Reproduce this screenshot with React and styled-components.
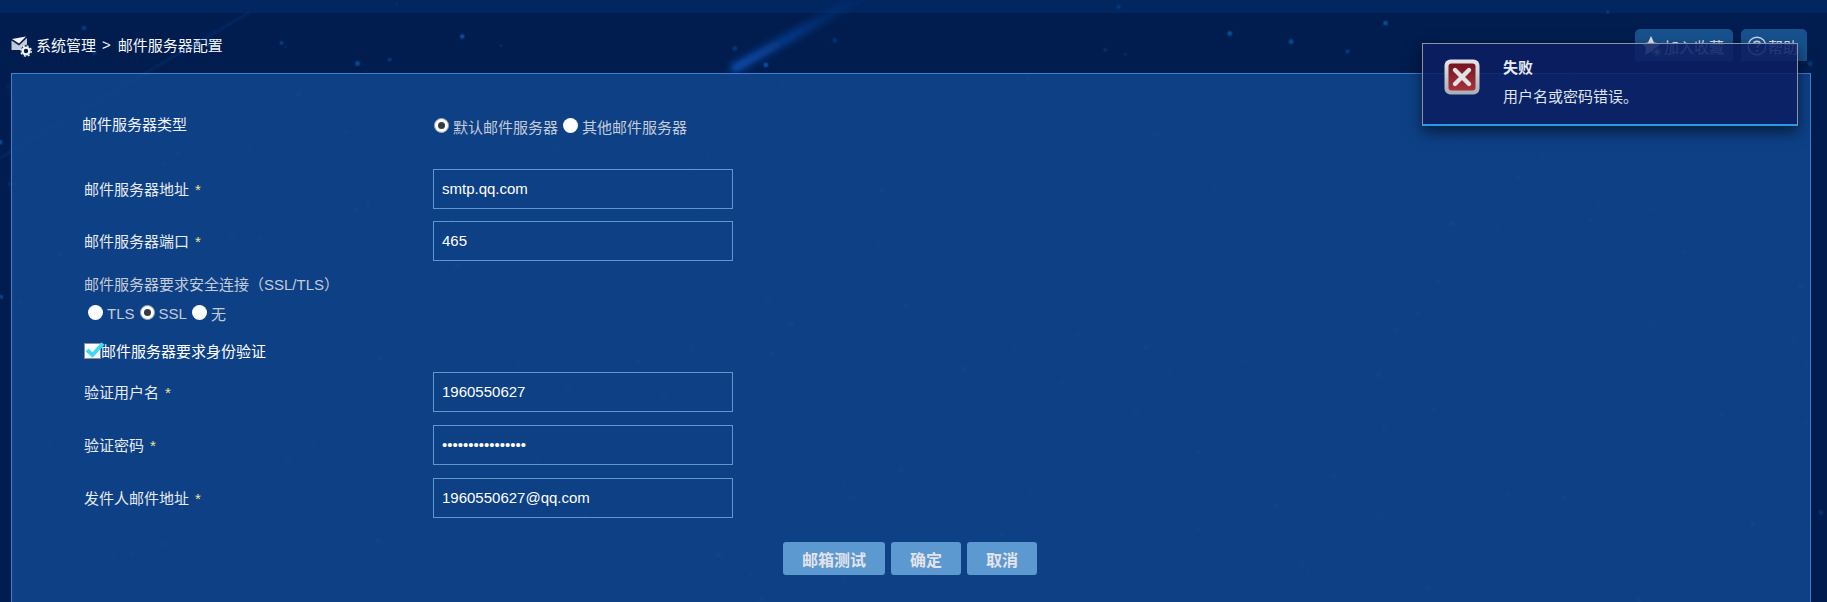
import React from 'react';
import styled, {createGlobalStyle} from 'styled-components';

const FONT = '"Liberation Sans", "Noto Sans CJK SC", sans-serif';

// seeded so the star field is the same on every load
function makeStars(count) {
	let seed = 17;
	const next = () => {
		seed = (seed * 16807) % 2147483647;
		return seed / 2147483647;
	};
	const stars = [];
	for (let i = 0; i < count; i++) {
		stars.push({x: next() * 1827, y: next() * 602, r: 0.8 + next() * 1.6, o: 0.25 + next() * 0.55});
	}
	return stars;
}

const stars = makeStars(260);

export default function App() {
	return (
		<Page>
			<GlobalStyle />
			<SkyDrawing width="1827" height="602" viewBox="0 0 1827 602">
				<defs>
					<linearGradient id="meteor" x1="0" y1="1" x2="1" y2="0">
						<stop offset="0" stopColor="#0a55c0" stopOpacity="0.9" />
						<stop offset="0.5" stopColor="#0a4aa8" stopOpacity="0.55" />
						<stop offset="1" stopColor="#0a3a88" stopOpacity="0" />
					</linearGradient>
					<filter id="soft"><feGaussianBlur stdDeviation="3.5" /></filter>
					<filter id="glow"><feGaussianBlur stdDeviation="1.3" /></filter>
				</defs>
				<line x1="735" y1="68" x2="870" y2="-8" stroke="url(#meteor)" strokeWidth="9" strokeLinecap="round" filter="url(#soft)" />
				<line x1="0" y1="158" x2="250" y2="12" stroke="#0a3f8f" strokeOpacity="0.3" strokeWidth="3" filter="url(#glow)" />
				{stars.map((s, i) => (
					<circle key={i} cx={s.x} cy={s.y} r={s.r} fill="#0f74d6" opacity={s.o} filter="url(#glow)" />
				))}
			</SkyDrawing>
			<TopStrip />
			<Header>
				<Crumb>
					<CrumbIcon />
					<span>系统管理</span>
					<CrumbArrow>&gt;</CrumbArrow>
					<span>邮件服务器配置</span>
				</Crumb>
				<HeaderActions>
					<HeaderButton><StarIcon />加入收藏</HeaderButton>
					<HeaderButton><HelpIcon />帮助</HeaderButton>
				</HeaderActions>
			</Header>
			<Panel>
				<TypeRow>
					<TypeLabel>邮件服务器类型</TypeLabel>
					<RadioGroup>
						<Radio checked />
						<RadioText>默认邮件服务器</RadioText>
						<Radio />
						<RadioText>其他邮件服务器</RadioText>
					</RadioGroup>
				</TypeRow>
				<Fields>
					<Field label="邮件服务器地址" value="smtp.qq.com" />
					<Field label="邮件服务器端口" value="465" />
				</Fields>
				<SecureTitle>邮件服务器要求安全连接（SSL/TLS）</SecureTitle>
				<SecureOptions>
					<Radio />
					<RadioText>TLS</RadioText>
					<Radio checked />
					<RadioText>SSL</RadioText>
					<Radio />
					<RadioText>无</RadioText>
				</SecureOptions>
				<CheckRow>
					<CheckBox>
						<svg width="19" height="15" viewBox="0 0 19 15">
							<path d="M2 8 L7.5 13 L18 1.5" fill="none" stroke="#3fd8f5" strokeWidth="4" />
						</svg>
					</CheckBox>
					<CheckText>邮件服务器要求身份验证</CheckText>
				</CheckRow>
				<AuthFields>
					<Field label="验证用户名" value="1960550627" />
					<Field label="验证密码" value="••••••••••••••••" />
					<Field label="发件人邮件地址" value="1960550627@qq.com" />
				</AuthFields>
				<Actions>
					<ActionButton>邮箱测试</ActionButton>
					<ActionButton>确定</ActionButton>
					<ActionButton>取消</ActionButton>
				</Actions>
			</Panel>
			<Toast>
				<ErrorIcon />
				<ToastBody>
					<ToastTitle>失败</ToastTitle>
					<ToastMessage>用户名或密码错误。</ToastMessage>
				</ToastBody>
			</Toast>
		</Page>
	);
}

function Field({label, value}) {
	return (
		<FieldRow>
			<FieldLabel>{label}<Required>*</Required></FieldLabel>
			<InputBox>{value}</InputBox>
		</FieldRow>
	);
}

function CrumbIcon() {
	return (
		<svg width="21" height="21" viewBox="0 0 21 21">
			<path d="M1 3 L15 0.5 L8 7.5 Z" fill="#f2f4f8" />
			<path d="M0.5 4.5 L8 9.5 L16 2 L16 8.5 L11.5 10.5 L9.5 14 L0.5 14 Z" fill="#c5ccd8" />
			<circle cx="15" cy="15" r="3.4" fill="none" stroke="#f4f6fa" strokeWidth="2.4" />
			<circle cx="15" cy="15" r="5.2" fill="none" stroke="#f4f6fa" strokeWidth="1.4" strokeDasharray="2 2.1" />
		</svg>
	);
}

function StarIcon() {
	return (
		<svg width="22" height="22" viewBox="0 0 22 22">
			<path d="M10 1 L13 7.5 L20 8.4 L15 13 L16 20 L10 16.5 L4 20 L5.2 13 L0.5 8.4 L7 7.5 Z" fill="#dfe6f0" />
			<circle cx="16" cy="17" r="4.5" fill="#5f7ea8" />
			<path d="M13.5 17 H18.5 M16 14.5 V19.5" stroke="#e6ecf4" strokeWidth="1.3" />
		</svg>
	);
}

function HelpIcon() {
	return (
		<svg width="20" height="20" viewBox="0 0 20 20">
			<circle cx="10" cy="10" r="8.8" fill="none" stroke="#cfd8e6" strokeWidth="1.5" />
			<path d="M7 7.6 C7 4.6 13 4.6 13 7.6 C13 9.6 10 9.6 10 12" fill="none" stroke="#cfd8e6" strokeWidth="1.8" />
			<circle cx="10" cy="14.8" r="1.1" fill="#cfd8e6" />
		</svg>
	);
}

function ErrorIcon() {
	return (
		<svg width="36" height="36" viewBox="0 0 36 36">
			<defs>
				<linearGradient id="errFrame" x1="0" y1="0" x2="0" y2="1">
					<stop offset="0" stopColor="#e4e6ea" />
					<stop offset="1" stopColor="#a9adb5" />
				</linearGradient>
				<linearGradient id="errFill" x1="0" y1="0" x2="0" y2="1">
					<stop offset="0" stopColor="#74141f" />
					<stop offset="1" stopColor="#a7333c" />
				</linearGradient>
			</defs>
			<rect x="0.5" y="0.5" width="35" height="35" rx="6" fill="url(#errFrame)" />
			<rect x="4.5" y="4.5" width="27" height="27" rx="3" fill="url(#errFill)" />
			<path d="M11 11 L25 25 M25 11 L11 25" stroke="#e2e2e6" strokeWidth="4.4" strokeLinecap="round" />
		</svg>
	);
}

function Radio({checked}) {
	return <RadioDot $checked={checked} />;
}

const GlobalStyle = createGlobalStyle`
	html, body {
		margin: 0;
		padding: 0;
		height: 100%;
		overflow: hidden;
		background: #011d4f;
	}
`;

const Page = styled.div`
	position: relative;
	width: 1827px;
	height: 602px;
	overflow: hidden;
	background: #011d4f;
	font-family: ${FONT};
	font-size: 15px;
	color: #fff;
`;

const SkyDrawing = styled.svg`
	position: absolute;
	top: 0;
	left: 0;
	z-index: 2;
	pointer-events: none;
`;

const TopStrip = styled.div`
	height: 13px;
	background: #012660;
`;

const Header = styled.div`
	display: flex;
	justify-content: space-between;
	height: 60px;
	padding: 16px 20px 0 11px;
	box-sizing: border-box;
`;

const Crumb = styled.div`
	display: flex;
	align-items: center;
	gap: 4px;
	height: 30px;
	color: #f4f7fb;

	svg {
		margin-top: 4px;
	}
`;

const CrumbArrow = styled.span`
	margin: 0 3px 0 2px;
`;

const HeaderActions = styled.div`
	display: flex;
	gap: 8px;
`;

const HeaderButton = styled.div`
	display: flex;
	align-items: center;
	gap: 1px;
	height: 32px;
	padding: 2px 9px 0 6px;
	box-sizing: border-box;
	border-radius: 5px 5px 0 0;
	background: #17528f;
	color: #dbe4f0;
`;

const Panel = styled.div`
	position: relative;
	z-index: 3;
	box-sizing: border-box;
	width: 1800px;
	height: 529px;
	margin-left: 11px;
	padding: 29px 0 0 72px;
	border: 1px solid #3a7fd0;
	border-bottom: 0;
	background: rgba(15, 69, 140, 0.9);
`;

const TypeRow = styled.div`
	display: flex;
	align-items: center;
	height: 40px;
`;

const TypeLabel = styled.div`
	width: 350px;
	margin-left: -2px;
	color: #eef2f7;
`;

const RadioGroup = styled.div`
	display: flex;
	align-items: center;
	margin-left: -2px;
	margin-top: 4px;
`;

const RadioDot = styled.span`
	box-sizing: border-box;
	position: relative;
	width: 15px;
	height: 15px;
	margin: 0 4px;
	border-radius: 50%;
	background: #fff;
	border: ${props => (props.$checked ? '1px solid #9aa4b0' : '0')};

	&::after {
		content: '';
		display: ${props => (props.$checked ? 'block' : 'none')};
		position: absolute;
		top: 3px;
		left: 3px;
		width: 7px;
		height: 7px;
		border-radius: 50%;
		background: #333b45;
	}
`;

const RadioText = styled.span`
	margin-top: 3px;
	margin-right: 1px;
	color: #c4ccd8;
`;

const Fields = styled.div`
	display: flex;
	flex-direction: column;
	gap: 12px;
	margin-top: 26px;
`;

const AuthFields = styled(Fields)`
	gap: 13px;
	margin-top: 12px;
`;

const FieldRow = styled.div`
	display: flex;
	align-items: center;
`;

const FieldLabel = styled.div`
	width: 349px;
	padding-bottom: 2px;
	color: #e6ebf2;
`;

const Required = styled.span`
	margin-left: 6px;
	color: #f0e68c;
`;

const InputBox = styled.div`
	box-sizing: border-box;
	width: 300px;
	height: 40px;
	padding: 0 8px;
	border: 1px solid #5b99d0;
	color: #fff;
	line-height: 38px;
`;

const SecureTitle = styled.div`
	margin-top: 14px;
	height: 20px;
	line-height: 20px;
	color: #c4ccd8;
`;

const SecureOptions = styled.div`
	display: flex;
	align-items: center;
	margin-top: 7px;
	height: 20px;
`;

const CheckRow = styled.div`
	display: flex;
	align-items: center;
	margin-top: 18px;
	height: 20px;
`;

const CheckBox = styled.span`
	position: relative;
	box-sizing: border-box;
	flex: none;
	width: 17px;
	height: 16px;
	margin-top: 2px;
	border: 1px solid #8a8f96;
	background: #fff;

	svg {
		position: absolute;
		top: -2px;
		left: 0;
		overflow: visible;
	}
`;

const CheckText = styled.span`
	position: relative;
	color: #fff;
`;

const Actions = styled.div`
	display: flex;
	justify-content: center;
	gap: 6px;
	width: 1652px;
	margin-top: 24px;
`;

const ActionButton = styled.div`
	display: flex;
	align-items: center;
	justify-content: center;
	height: 33px;
	padding: 0 19px;
	border-radius: 3px;
	background: #5b99d0;
	color: #e3e3ea;
	font-size: 16px;
	font-weight: 700;
`;

const Toast = styled.div`
	position: absolute;
	z-index: 5;
	top: 43px;
	left: 1422px;
	box-sizing: border-box;
	display: flex;
	gap: 23px;
	width: 376px;
	height: 83px;
	padding: 15px 21px;
	border: 1px solid #8a93a8;
	border-bottom: 2px solid #2a9ae0;
	background: rgba(12, 30, 98, 0.87);
	box-shadow: 0 6px 14px rgba(0, 0, 0, 0.55);
`;

const ToastBody = styled.div`
	display: flex;
	flex-direction: column;
	gap: 11px;
`;

const ToastTitle = styled.div`
	font-weight: 700;
	line-height: 18px;
	color: #e6e9f0;
`;

const ToastMessage = styled.div`
	line-height: 18px;
	color: #dfe4ee;
`;
